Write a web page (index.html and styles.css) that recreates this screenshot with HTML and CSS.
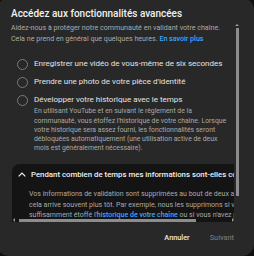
FILE: index.html
```html
<!DOCTYPE html>
<html lang="fr">
<head>
<meta charset="utf-8">
<link rel="stylesheet" href="styles.css">
</head>
<body>
<div class="dialog">
  <h1 class="title">Accédez aux fonctionnalités avancées</h1>
  <div class="scroll">
    <div class="viewport">
      <p class="intro">Aidez-nous à protéger notre communauté en validant votre chaîne.<br>Cela ne prend en général que quelques heures. <a class="link">En savoir plus</a></p>
      <ul class="options">
        <li class="option"><span class="radio"></span><div class="option-text"><div class="label">Enregistrer une vidéo de vous-même de six secondes</div></div></li>
        <li class="option"><span class="radio"></span><div class="option-text"><div class="label">Prendre une photo de votre pièce d'identité</div></div></li>
        <li class="option"><span class="radio"></span><div class="option-text"><div class="label">Développer votre historique avec le temps</div><p class="desc">En utilisant YouTube et en suivant le règlement de la<br>communauté, vous étoffez l'historique de votre chaîne. Lorsque<br>votre historique sera assez fourni, les fonctionnalités seront<br>débloquées automatiquement (une utilisation active de deux<br>mois est généralement nécessaire).</p></div></li>
      </ul>
      <div class="panel">
        <div class="panel-head">
          <svg class="chevron" width="8" height="5" viewBox="0 0 8 5"><path d="M0.7 4.3 L4 1 L7.3 4.3" fill="none" stroke="#f1f1f1" stroke-width="1.2"/></svg>
          <span class="panel-title">Pendant combien de temps mes informations sont-elles conservées ?</span>
        </div>
        <p class="panel-body">Vos informations de validation sont supprimées au bout de deux ans, mais<br>cela arrive souvent plus tôt. Par exemple, nous les supprimons si vous avez<br>suffisamment étoffé l'<a class="link">historique de votre chaîne</a> ou si vous n'avez pas utilisé</p>
      </div>
    </div>
    <div class="vbar"><span class="arrow-v"></span><span class="vthumb"></span></div>
    <div class="hbar"><span class="arrow-l"></span><span class="hthumb"></span><span class="arrow-r"></span></div>
  </div>
  <div class="actions">
    <button class="btn">Annuler</button>
    <button class="btn btn-disabled">Suivant</button>
  </div>
</div>
</body>
</html>
```
FILE: styles.css
```css
html, body {
  margin: 0;
  padding: 0;
}
body {
  width: 254px;
  height: 256px;
  overflow: hidden;
  background: #0f0f0f;
  font-family: Roboto, "Noto Sans", sans-serif;
  color: #f1f1f1;
}
.dialog {
  margin: -2px 0 0 -3px;
  width: 257px;
  height: 258px;
  box-sizing: border-box;
  padding: 9px 0 0 14px;
  background: #282828;
  border-radius: 12px;
  display: flex;
  flex-direction: column;
}
.title {
  margin: 0;
  font-size: 10px;
  line-height: 13px;
  font-weight: 500;
  color: #f1f1f1;
}
.scroll {
  position: relative;
  margin-top: 2px;
  width: 230px;
  height: 200px;
  flex: none;
}
.viewport {
  width: 223px;
  height: 200px;
  overflow: hidden;
}
.intro {
  margin: 1px 0 0;
  font-size: 7.1px;
  line-height: 10.5px;
  color: #aaaaaa;
  white-space: nowrap;
}
.link {
  color: #3ea6ff;
  font-weight: 500;
}
.options {
  list-style: none;
  margin: 15px 0 0;
  padding: 0;
  display: flex;
  flex-direction: column;
  gap: 7px;
}
.option {
  display: flex;
  align-items: flex-start;
  gap: 6px;
  padding-left: 6px;
}
.radio {
  flex: none;
  width: 9px;
  height: 9px;
  border: 1px solid #7a7a7a;
  border-radius: 50%;
  margin-top: 0;
}
.label {
  font-size: 8px;
  line-height: 10px;
  color: #e4e4e4;
  white-space: nowrap;
}
.desc {
  margin: 2.4px 0 0;
  font-size: 6.85px;
  line-height: 9.2px;
  color: #aaaaaa;
  white-space: nowrap;
}
.panel {
  margin: 11px 0 0 1px;
  width: 280px;
  background: #141414;
  border-radius: 8px 8px 0 0;
  padding-bottom: 12px;
}
.panel-head {
  height: 20px;
  display: flex;
  align-items: center;
  gap: 5px;
  padding-left: 6px;
}
.chevron {
  flex: none;
}
.panel-title {
  font-size: 7.8px;
  font-weight: 500;
  color: #f1f1f1;
  white-space: nowrap;
}
.panel-body {
  margin: 0;
  padding: 5px 0 0 17px;
  font-size: 7px;
  line-height: 10.5px;
  color: #aaaaaa;
  white-space: nowrap;
}
.vbar {
  position: absolute;
  left: 224px;
  top: 2px;
  width: 4px;
  display: flex;
  flex-direction: column;
  align-items: center;
  gap: 2px;
}
.arrow-v {
  width: 0;
  height: 0;
  border-left: 2px solid transparent;
  border-right: 2px solid transparent;
  border-bottom: 2px solid #9a9a9a;
}
.vthumb {
  width: 3px;
  height: 168px;
  background: #8c8c8c;
}
.hbar {
  position: absolute;
  left: 1px;
  top: 196px;
  width: 223px;
  height: 4px;
  display: flex;
  align-items: center;
}
.arrow-l {
  width: 0;
  height: 0;
  border-top: 2px solid transparent;
  border-bottom: 2px solid transparent;
  border-right: 2px solid #9a9a9a;
  margin-left: 1px;
}
.hthumb {
  margin-left: 4px;
  width: 177px;
  height: 3px;
  background: #8c8c8c;
}
.arrow-r {
  margin-left: auto;
  margin-right: 1px;
  width: 0;
  height: 0;
  border-top: 2px solid transparent;
  border-bottom: 2px solid transparent;
  border-left: 2px solid #9a9a9a;
}
.actions {
  flex: 1;
  display: flex;
  justify-content: flex-end;
  align-items: center;
  gap: 4px;
  padding: 0 12px 2px 0;
}
.btn {
  background: none;
  border: 0;
  padding: 0 8px;
  font-family: Roboto, "Noto Sans", sans-serif;
  font-size: 7.3px;
  font-weight: 500;
  line-height: 16px;
  color: #e8e8e8;
}
.btn-disabled {
  color: #717171;
}
```
